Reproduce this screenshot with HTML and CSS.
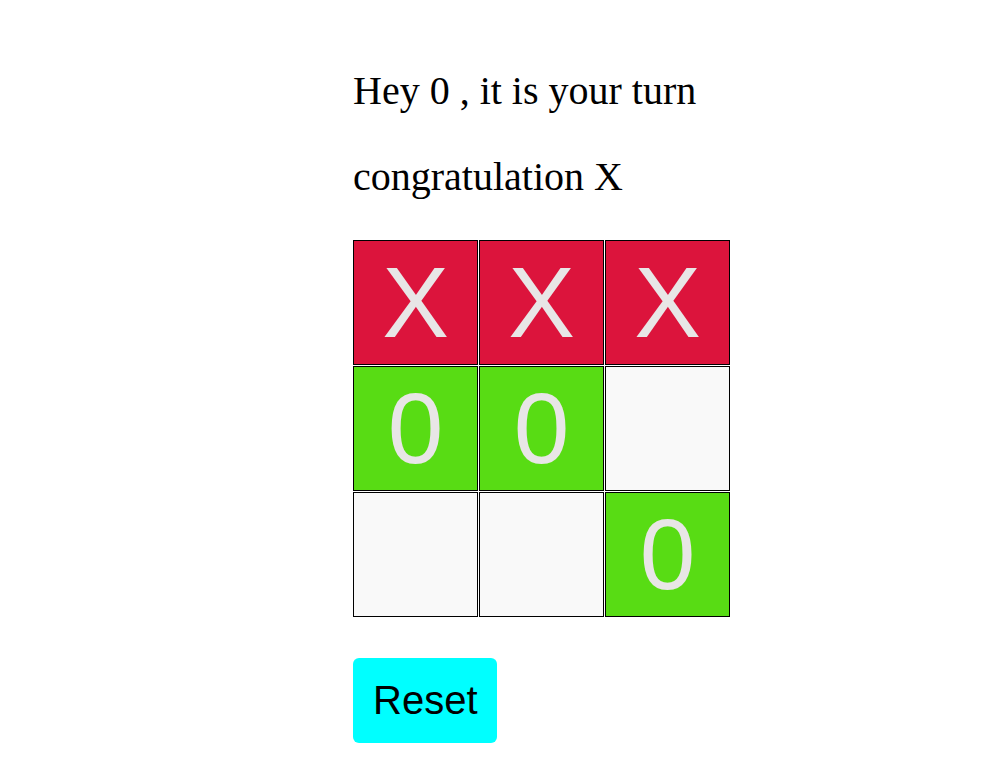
FILE: index.html
```html
<!DOCTYPE html>
<html>
<head>
<meta charset="utf-8">
<link rel="stylesheet" href="styles.css">
</head>
<body>
<div class="game">
  <p class="msg">Hey 0 , it is your turn</p>
  <p class="msg">congratulation X</p>
  <div class="board">
    <div class="cell x">X</div>
    <div class="cell x">X</div>
    <div class="cell x">X</div>
    <div class="cell o">0</div>
    <div class="cell o">0</div>
    <div class="cell"></div>
    <div class="cell"></div>
    <div class="cell"></div>
    <div class="cell o">0</div>
  </div>
  <button class="reset">Reset</button>
</div>
</body>
</html>
```

FILE: styles.css
```css
body {
  margin: 0;
  background: #ffffff;
}
.game {
  padding: 68px 0 0 353px;
}
.msg {
  font-family: "Liberation Serif", "Times New Roman", serif;
  font-size: 40px;
  margin: 0 0 40px 0;
  line-height: 46px;
  color: #000;
}
.board {
  display: grid;
  grid-template-columns: repeat(3, 125px);
  grid-auto-rows: 125px;
  gap: 1px;
  width: 377px;
}
.cell {
  box-sizing: border-box;
  border: 1px solid #000;
  background: #f9f9f9;
  display: flex;
  align-items: center;
  justify-content: center;
  font-family: "Liberation Sans", Arial, sans-serif;
  font-size: 100px;
  color: #e8e6e6;
}
.cell.x { background: #dc143c; }
.cell.o { background: #58dc14; }
.reset {
  margin-top: 41px;
  background: #00ffff;
  border: none;
  border-radius: 6px;
  font-family: "Liberation Sans", Arial, sans-serif;
  font-size: 40px;
  padding: 19px 20px;
  color: #000;
  width: 144px;
  height: 85px;
}
```
